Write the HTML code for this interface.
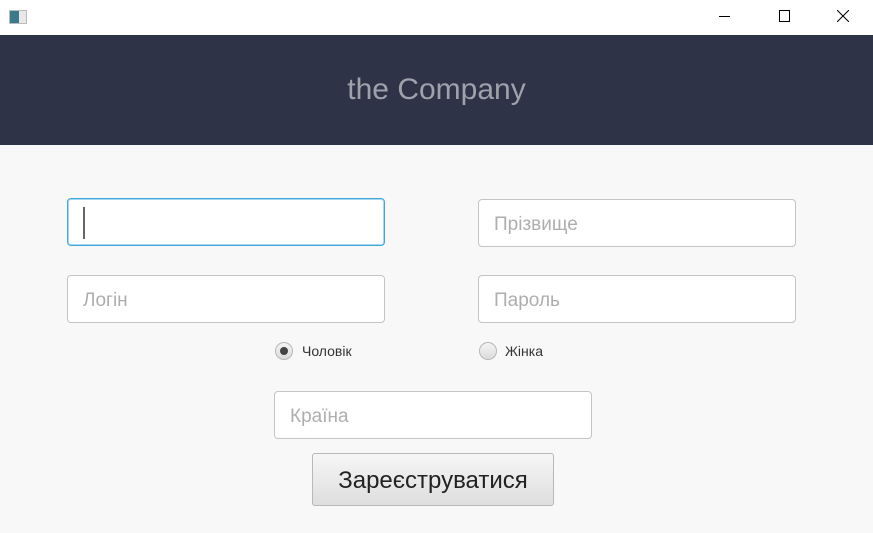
<!DOCTYPE html>
<html><head><meta charset="utf-8"><style>
body{margin:0;width:873px;height:533px;background:#f8f8f8;position:relative;overflow:hidden;font-family:"Liberation Sans",sans-serif}
.tb{position:absolute;left:0;top:0;width:873px;height:35px;background:#fff}
.hd{position:absolute;left:0;top:35px;width:873px;height:110px;background:#2e3348;color:#9ea2ab;font-size:30px;text-align:center;line-height:110px}
.f{position:absolute;box-sizing:border-box;width:318px;height:48px;background:#fff;border:1px solid #c4c4c4;border-radius:4px;color:#aeaeae;font-size:19px;line-height:50px;padding-left:15px}
.r{position:absolute;width:16px;height:16px;border-radius:50%;border:1px solid #b8b8b8;background:linear-gradient(#f4f4f4,#dcdcdc)}
.l{position:absolute;font-size:14px;color:#333}
</style></head><body>
<div class="tb">
<div style="position:absolute;left:9px;top:10px;width:16px;height:12px;border:1px solid #bbb;background:linear-gradient(90deg,#3a7a8a 0 55%,#e8e8e8 55%)"></div>
<div style="position:absolute;left:719px;top:16px;width:11px;height:1px;background:#000"></div>
<div style="position:absolute;left:779px;top:10px;width:9px;height:10px;border:1px solid #000"></div>
<svg style="position:absolute;left:837px;top:10px" width="12" height="12"><path d="M0 0L12 12M12 0L0 12" stroke="#000" stroke-width="1"/></svg>
</div>
<div class="hd">the Company</div>
<div class="f" style="left:67px;top:198px;border:1px solid #3fa8d8;box-shadow:0 0 0 1px #a8d8f0 inset"><div style="position:absolute;left:15px;top:8px;width:2px;height:32px;background:#666"></div></div>
<div class="f" style="left:478px;top:199px">Прізвище</div>
<div class="f" style="left:67px;top:275px">Логін</div>
<div class="f" style="left:478px;top:275px">Пароль</div>
<div class="r" style="left:275px;top:342px"><div style="position:absolute;left:4px;top:4px;width:8px;height:8px;border-radius:50%;background:#444"></div></div>
<div class="l" style="left:302px;top:343px">Чоловік</div>
<div class="r" style="left:479px;top:342px"></div>
<div class="l" style="left:505px;top:343px">Жінка</div>
<div class="f" style="left:274px;top:391px">Країна</div>
<div style="position:absolute;left:312px;top:453px;width:242px;height:53px;box-sizing:border-box;border:1px solid #b8b8b8;border-radius:3px;background:linear-gradient(#f6f6f6,#dedede);font-size:24px;color:#222;text-align:center;line-height:53px">Зареєструватися</div>
</body></html>
